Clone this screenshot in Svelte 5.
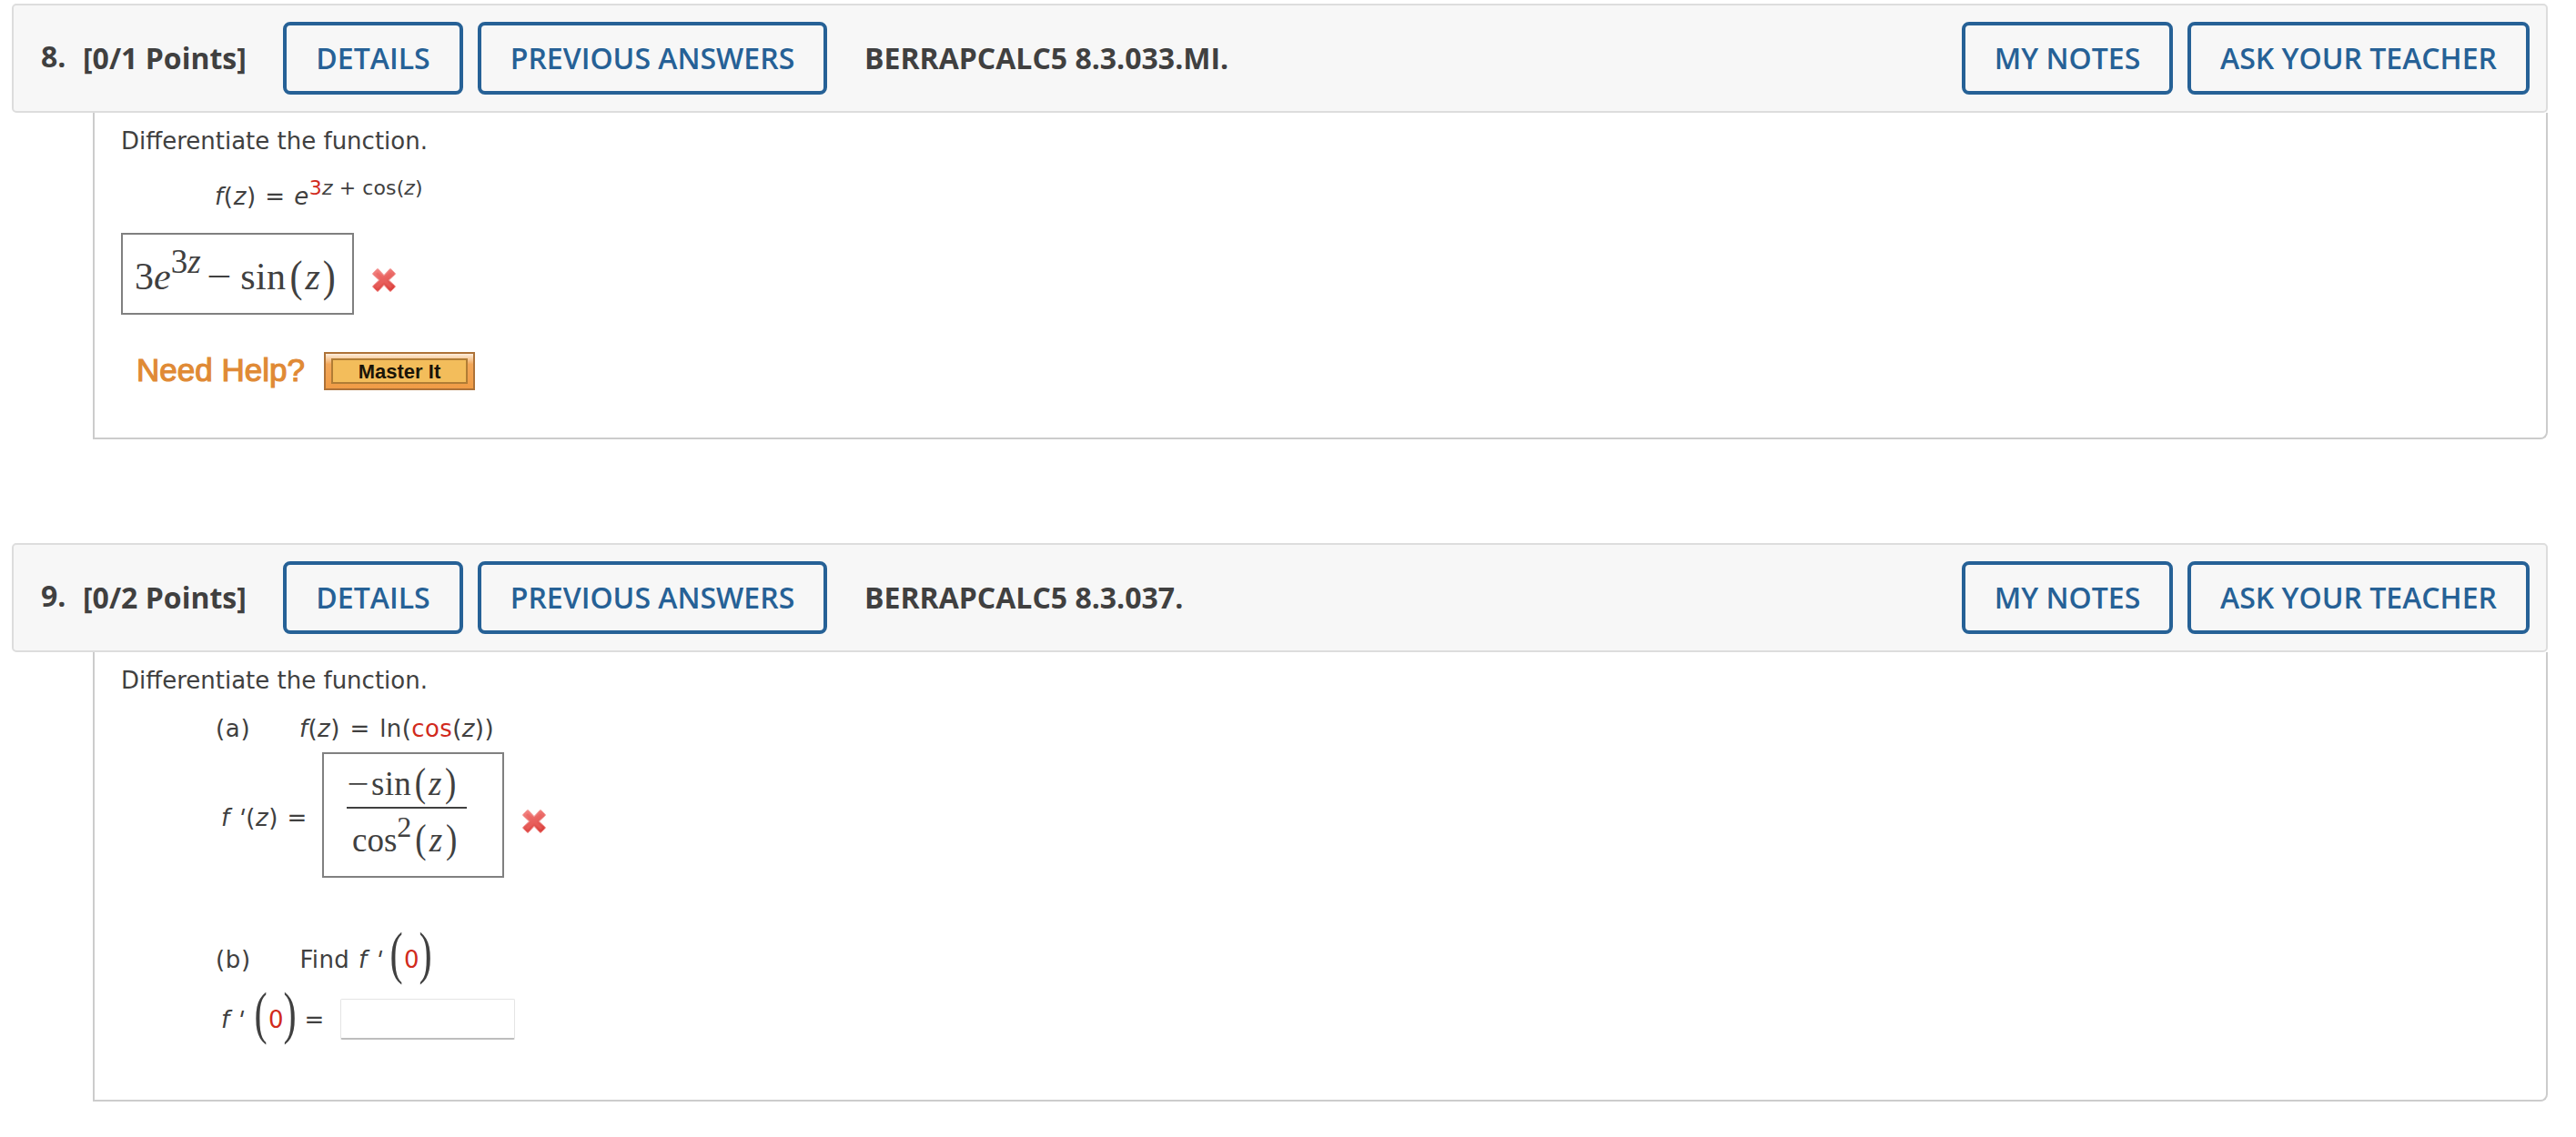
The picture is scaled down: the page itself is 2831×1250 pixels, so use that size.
<script>
  const notes = 'MY NOTES';
  const ask = 'ASK YOUR TEACHER';
</script>

{#snippet header(number, points, code)}
  <header class="bar">
    <span class="num">{number}</span>
    <span class="points">{points}</span>
    <button class="btn details">DETAILS</button>
    <button class="btn previous">PREVIOUS ANSWERS</button>
    <span class="code">{code}</span>
    <button class="btn notes">{notes}</button>
    <button class="btn ask">{ask}</button>
  </header>
{/snippet}

{#snippet wrong()}
  <svg class="wrong" viewBox="0 0 28 28" width="28" height="28" aria-label="incorrect">
    <defs>
      <linearGradient id="red" x1="0" y1="0" x2="0.3" y2="1">
        <stop offset="0" stop-color="#f58a88" />
        <stop offset="1" stop-color="#dc4440" />
      </linearGradient>
    </defs>
    <path
      d="M2 6 L6 2 Q7 1 8 2 L14 8.5 L20 2 Q21 1 22 2 L26 6 Q27 7 26 8 L19.5 14 L26 20 Q27 21 26 22 L22 26 Q21 27 20 26 L14 19.5 L8 26 Q7 27 6 26 L2 22 Q1 21 2 20 L8.5 14 L2 8 Q1 7 2 6Z"
      fill="url(#red)" stroke="#f6aaa8" stroke-width="1" />
    <path d="M7 7 L21 21 M21 7 L7 21" stroke="#ec615e" stroke-width="3" stroke-linecap="round" opacity="0.5" />
  </svg>
{/snippet}

<main>
  <section class="question">
    {@render header('8.', '[0/1 Points]', 'BERRAPCALC5 8.3.033.MI.')}
    <div class="body first">
      <p class="line">Differentiate the function.</p>
      <p class="line formula"><i>f</i>(<i>z</i>) = <i>e</i><span class="exp"><b>3</b><i>z</i> + cos(<i>z</i>)</span></p>
      <div class="answer-row">
        <div class="answer one">
          <div class="math big">3<i>e</i><span class="sup">3<i>z</i></span><span class="minus spaced">−</span><span class="fn">sin</span><span class="paren">(</span><i class="z">z</i><span class="paren close">)</span></div>
        </div>
        {@render wrong()}
      </div>
      <div class="help">
        <span class="need">Need Help?</span>
        <button class="master"><span>Master It</span></button>
      </div>
    </div>
  </section>

  <section class="question">
    {@render header('9.', '[0/2 Points]', 'BERRAPCALC5 8.3.037.')}
    <div class="body second">
      <p class="line">Differentiate the function.</p>
      <p class="line part"><span class="label">(a)</span><span class="given"><i>f</i>(<i>z</i>) = ln(<b>cos</b>(<i>z</i>))</span></p>
      <div class="answer-row derivative">
        <span class="line lhs"><i>f</i> <i class="tick">'</i>(<i>z</i>) =</span>
        <div class="answer two">
          <div class="math small">
            <div class="numer"><span class="minus">−</span><span class="fn">sin</span><span class="paren">(</span><i class="z">z</i><span class="paren close">)</span></div>
            <div class="denom">cos<span class="sup">2</span><span class="paren">(</span><i class="z">z</i><span class="paren close">)</span></div>
          </div>
        </div>
        {@render wrong()}
      </div>
      <p class="line part find"><span class="label">(b)</span><span class="word">Find</span><i class="prime">f <span class="tick">'</span></i><span class="tall">(</span><b class="zero">0</b><span class="tall">)</span></p>
      <div class="line value"><i class="prime">f <span class="tick">'</span></i><span class="tall">(</span><b class="zero">0</b><span class="tall">)</span><span class="eq">=</span><input aria-label="answer" /></div>
    </div>
  </section>
</main>

<style>
  :global(body) {
    margin: 0;
    background: #fff;
  }
  main {
    box-sizing: border-box;
    width: 2831px;
    height: 1250px;
    padding: 4px 31px 0 13px;
    display: flex;
    flex-direction: column;
    gap: 114px;
    color: #404040;
    overflow: hidden;
  }
  .bar {
    box-sizing: border-box;
    height: 120px;
    border: 2px solid #ddd;
    border-radius: 5px;
    background: #f7f7f7;
    display: flex;
    align-items: center;
    padding: 0 18px 0 30px;
    font: 700 32px/44px 'Open Sans', sans-serif;
    white-space: nowrap;
  }
  .num {
    width: 46px;
    padding-bottom: 4px;
  }
  .points {
    width: 220px;
  }
  .code {
    margin-left: 41px;
    flex: 1;
  }
  .btn {
    box-sizing: border-box;
    height: 80px;
    padding: 0;
    border: 4px solid #266196;
    border-radius: 8px;
    background: transparent;
    color: #266196;
    font: 600 32px/44px 'Open Sans', sans-serif;
    text-align: center;
  }
  .details {
    width: 198px;
    margin-right: 16px;
  }
  .previous {
    width: 384px;
  }
  .notes {
    width: 232px;
    margin-right: 16px;
  }
  .ask {
    width: 376px;
  }
  .body {
    box-sizing: border-box;
    margin-left: 89px;
    padding: 16px 0 0 29px;
    border: 2px solid #ccc;
    border-top: 0;
    border-radius: 0 0 8px 0;
  }
  .first {
    height: 359px;
  }
  .second {
    height: 494px;
  }
  .line {
    margin: 0;
    height: 30px;
    font: 26px/30px 'DejaVu Sans', Verdana, sans-serif;
    white-space: nowrap;
  }
  b {
    color: #d12a1c;
    font-weight: 400;
  }
  .formula {
    margin: 31px 0 0 103px;
    letter-spacing: 0.7px;
    word-spacing: 0.4px;
  }
  .exp {
    font-size: 22px;
    line-height: 0;
    vertical-align: 11px;
    letter-spacing: 0.1px;
    word-spacing: 0;
  }
  .answer-row {
    display: flex;
    align-items: center;
  }
  .first .answer-row {
    margin-top: 25px;
  }
  .answer {
    box-sizing: border-box;
    border: 2px solid #808080;
  }
  .one {
    width: 256px;
    height: 90px;
    padding: 26px 0 0 13px;
  }
  .two {
    width: 200px;
    height: 138px;
    padding: 13px 0 0 25px;
  }
  .wrong {
    flex: none;
    margin: 14px 0 0 19px;
  }
  .math {
    font-family: 'Liberation Serif', serif;
    line-height: 40px;
    white-space: nowrap;
  }
  .big {
    font-size: 42px;
    height: 40px;
  }
  .small {
    font-size: 37px;
  }
  .big .sup {
    font-size: 37px;
    line-height: 0;
    vertical-align: 18px;
  }
  .small .sup {
    font-size: 32px;
    line-height: 0;
    vertical-align: 16px;
  }
  .minus {
    display: inline-block;
    transform: scaleX(1.15);
  }
  .spaced {
    margin: 0 12px 0 8px;
  }
  .fn {
    letter-spacing: 0.4px;
  }
  .small .fn {
    margin-left: 4px;
  }
  .paren {
    display: inline-block;
    margin-left: 4px;
    transform: translateY(-1px) scaleY(1.17);
  }
  .big .paren {
    transform: scaleY(1.15);
  }
  .big .close {
    margin-left: 3px;
  }
  .z {
    margin-left: 3px;
  }
  .numer {
    box-sizing: border-box;
    height: 47px;
    width: 132px;
    padding-left: 2px;
    border-bottom: 2px solid #404040;
  }
  .numer .paren {
    margin-left: 3.5px;
  }
  .denom {
    margin-top: 15px;
    padding-left: 6px;
    height: 40px;
  }
  .help {
    margin: 41px 0 0 17px;
    display: flex;
    align-items: center;
  }
  .need {
    width: 206px;
    padding-bottom: 2px;
    color: #e08a35;
    font: 35px/40px 'Liberation Sans', Arial, sans-serif;
    -webkit-text-stroke: 1.2px #e08a35;
    white-space: nowrap;
  }
  .master {
    box-sizing: border-box;
    width: 166px;
    height: 42px;
    padding: 5px 6px;
    border: 2px solid #ad7238;
    background: linear-gradient(#fdeedd, #f2a759 30%, #f09c46);
    display: flex;
  }
  .master span {
    flex: 1;
    border: 2px solid #b07c35;
    background: #f3bd5b;
    color: #1a1408;
    font: 700 22px/26px 'Liberation Sans', Arial, sans-serif;
    text-align: center;
  }
  .part {
    display: flex;
    margin: 23px 0 0 104px;
    letter-spacing: 0.4px;
  }
  .label {
    width: 92px;
    letter-spacing: 0.65px;
  }
  .given {
    word-spacing: 2px;
  }
  .derivative {
    margin: 11px 0 0 110px;
  }
  .lhs {
    width: 111px;
    padding-top: 6px;
    letter-spacing: 0.65px;
    word-spacing: 0.6px;
  }
  .tick {
    display: inline-block;
    transform: skewX(-14deg);
  }
  .find {
    margin-top: 75px;
    letter-spacing: 0.3px;
  }
  .word {
    margin-left: 0.5px;
    width: 64.5px;
  }
  .prime {
    width: 40.5px;
    word-spacing: 1px;
  }
  .find .prime {
    width: 38.5px;
  }
  .tall {
    width: 13px;
    transform: translateY(-3px) scale(1.7, 2.5);
    transform-origin: 50% 56%;
    font-family: 'Liberation Serif', serif;
    font-size: 25px;
    letter-spacing: 0;
  }
  .zero {
    width: 17px;
    margin: 0 4px 0 -1.5px;
  }
  .value {
    display: flex;
    margin: 36px 0 0 110px;
  }
  .eq {
    width: 39px;
    margin-left: 5.5px;
  }
  input {
    box-sizing: border-box;
    width: 192px;
    height: 45px;
    margin-top: -8px;
    padding: 0;
    border: 1px solid #e4e4e4;
    border-bottom: 2px solid #bdbdbd;
    border-radius: 2px;
    background: #fff;
  }
</style>
